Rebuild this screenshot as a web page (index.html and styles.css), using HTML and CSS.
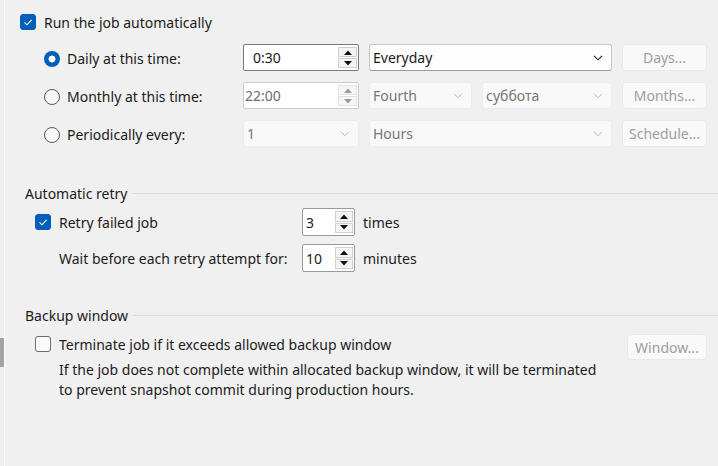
FILE: index.html
```html
<!DOCTYPE html>
<html>
<head>
<meta charset="utf-8">
<link rel="stylesheet" href="styles.css">
</head>
<body>
<div class="page">
  <div class="edge"><div class="grip"></div></div>
  <div class="panel">
    <div class="row-top">
      <span class="cb checked"><svg width="16" height="16" viewBox="0 0 16 16"><path d="M4.5 8.3 L7 10.8 L11.6 5.8" fill="none" stroke="#fff" stroke-width="1.1"/></svg></span>
      <span class="lbl">Run the job automatically</span>
    </div>

    <div class="sched">
      <div class="radio-cell"><span class="rb on"></span><span>Daily at this time:</span></div>
      <div class="spin time focus">
        <span class="val">0:30</span>
        <span class="arrows">
          <span class="arr"><svg width="8" height="5" viewBox="0 0 8 5"><path d="M0 5 L4 0.5 L8 5Z" fill="#111"/></svg></span>
          <span class="arr"><svg width="8" height="5" viewBox="0 0 8 5"><path d="M0 0 L4 4.5 L8 0Z" fill="#111"/></svg></span>
        </span>
      </div>
      <div class="combo wide"><span>Everyday</span><svg width="10" height="6" viewBox="0 0 10 6"><path d="M1 0.8 L5 4.8 L9 0.8" fill="none" stroke="#222" stroke-width="1.1"/></svg></div>
      <div class="btn">Days...</div>

      <div class="radio-cell"><span class="rb"></span><span>Monthly at this time:</span></div>
      <div class="spin time dis">
        <span class="val">22:00</span>
        <span class="arrows">
          <span class="arr"><svg width="8" height="5" viewBox="0 0 8 5"><path d="M0 5 L4 0.5 L8 5Z" fill="#9a9a9a"/></svg></span>
          <span class="arr"><svg width="8" height="5" viewBox="0 0 8 5"><path d="M0 0 L4 4.5 L8 0Z" fill="#9a9a9a"/></svg></span>
        </span>
      </div>
      <div class="combo dis"><span>Fourth</span><svg width="10" height="6" viewBox="0 0 10 6"><path d="M1 0.8 L5 4.8 L9 0.8" fill="none" stroke="#b5b5b5" stroke-width="1"/></svg></div>
      <div class="combo dis"><span>суббота</span><svg width="10" height="6" viewBox="0 0 10 6"><path d="M1 0.8 L5 4.8 L9 0.8" fill="none" stroke="#b5b5b5" stroke-width="1"/></svg></div>
      <div class="btn">Months...</div>

      <div class="radio-cell"><span class="rb"></span><span>Periodically every:</span></div>
      <div class="combo dis"><span>1</span><svg width="10" height="6" viewBox="0 0 10 6"><path d="M1 0.8 L5 4.8 L9 0.8" fill="none" stroke="#b5b5b5" stroke-width="1"/></svg></div>
      <div class="combo dis wide"><span>Hours</span><svg width="10" height="6" viewBox="0 0 10 6"><path d="M1 0.8 L5 4.8 L9 0.8" fill="none" stroke="#b5b5b5" stroke-width="1"/></svg></div>
      <div class="btn">Schedule...</div>
    </div>

    <div class="group-head retry-head"><span>Automatic retry</span><span class="rule"></span></div>
    <div class="retry">
      <div class="retry-label"><span class="cb checked"><svg width="16" height="16" viewBox="0 0 16 16"><path d="M4.5 8.3 L7 10.8 L11.6 5.8" fill="none" stroke="#fff" stroke-width="1.1"/></svg></span><span>Retry failed job</span></div>
      <div class="spin num">
        <span class="val">3</span>
        <span class="arrows">
          <span class="arr"><svg width="8" height="5" viewBox="0 0 8 5"><path d="M0 5 L4 0.5 L8 5Z" fill="#111"/></svg></span>
          <span class="arr"><svg width="8" height="5" viewBox="0 0 8 5"><path d="M0 0 L4 4.5 L8 0Z" fill="#111"/></svg></span>
        </span>
      </div>
      <span class="unit">times</span>

      <div class="retry-label indent"><span>Wait before each retry attempt for:</span></div>
      <div class="spin num">
        <span class="val">10</span>
        <span class="arrows">
          <span class="arr"><svg width="8" height="5" viewBox="0 0 8 5"><path d="M0 5 L4 0.5 L8 5Z" fill="#111"/></svg></span>
          <span class="arr"><svg width="8" height="5" viewBox="0 0 8 5"><path d="M0 0 L4 4.5 L8 0Z" fill="#111"/></svg></span>
        </span>
      </div>
      <span class="unit">minutes</span>
    </div>

    <div class="group-head backup-head"><span>Backup window</span><span class="rule"></span></div>
    <div class="backup-row">
      <div class="backup-label"><span class="cb"></span><span>Terminate job if it exceeds allowed backup window</span></div>
      <div class="btn win">Window...</div>
    </div>
    <p class="desc">If the job does not complete within allocated backup window, it will be terminated<br>to prevent snapshot commit during production hours.</p>
  </div>
</div>
</body>
</html>
```

FILE: styles.css
```css
* { box-sizing: border-box; }
html, body {
  margin: 0;
  padding: 0;
  background: #f0f0f0;
}
body {
  font-family: "Noto Sans", "Segoe UI", sans-serif;
  font-size: 14px;
  color: #1b1b1b;
  width: 718px;
  height: 466px;
  overflow: hidden;
}
.page {
  display: flex;
  height: 466px;
}
.edge {
  flex: none;
  width: 4px;
  position: relative;
  background: #efefef;
}
.grip {
  position: absolute;
  left: 0;
  top: 338px;
  width: 4px;
  height: 29px;
  background: #a3a3a3;
}
.panel {
  flex: 1;
  min-width: 0;
  border-left: 1px solid #ffffff;
  padding: 10px 11px 0 15px;
}
.row-top {
  display: flex;
  align-items: center;
  gap: 8px;
  height: 24px;
}
.cb {
  width: 16px;
  height: 16px;
  border-radius: 3px;
  border: 1px solid #6b6b6b;
  background: #fbfbfb;
  display: inline-flex;
  flex: none;
}
.cb.checked {
  background: #005fb8;
  border-color: #005fb8;
}
.cb svg { margin: -1px; }

.sched {
  margin-top: 10px;
  margin-left: 24px;
  display: grid;
  grid-template-columns: 189px 116px 103px 130px 85px;
  grid-template-rows: 27px 27px 27px;
  column-gap: 10px;
  row-gap: 11px;
}
.radio-cell {
  display: flex;
  align-items: center;
  gap: 7px;
  height: 27px;
  padding-top: 2px;
}
.rb {
  width: 16px;
  height: 16px;
  border-radius: 50%;
  border: 1px solid #5c5c5c;
  background: #f7f7f7;
  flex: none;
}
.rb.on {
  border: none;
  background: radial-gradient(circle, #ffffff 0 3.2px, #005fb8 3.8px);
}
.spin {
  display: flex;
  align-items: stretch;
  background: #fff;
  border: 1px solid #9a9a9a;
  border-radius: 2px;
}
.spin .val {
  flex: 1;
  display: flex;
  align-items: center;
}
.spin.time .val { padding-left: 9px; }
.spin.time.focus { border-color: #7a7a7a; }
.spin.dis {
  border-color: #cbcbcb;
  color: #6d6d6d;
}
.spin.time.dis .val { padding-left: 1px; }
.arrows {
  display: flex;
  flex-direction: column;
  justify-content: center;
  gap: 1px;
  padding: 2px 1px 2px 0;
}
.arr {
  width: 19px;
  height: 11px;
  display: flex;
  align-items: center;
  justify-content: center;
  border: 1px solid #cfcfcf;
  background: #f4f4f4;
}
.spin.dis .arr {
  border-color: #e2e2e2;
  background: #f6f6f6;
}
.combo {
  display: flex;
  align-items: center;
  justify-content: space-between;
  padding: 0 8px 0 3px;
  background: #fdfdfd;
  border: 1px solid #c6c6c6;
  border-bottom-color: #9c9c9c;
  border-radius: 3px;
}
.combo.wide { grid-column: span 2; }
.combo.dis {
  background: #f9f9f9;
  border: 1px solid #ececec;
  color: #767676;
}
.btn {
  display: flex;
  align-items: center;
  justify-content: center;
  background: #f9f9f9;
  border: 1px solid #e8e8e8;
  border-radius: 4px;
  color: #9e9e9e;
}

.group-head {
  display: flex;
  align-items: center;
  gap: 5px;
  height: 20px;
  margin-left: 5px;
  margin-right: -11px;
}
.group-head .rule {
  flex: 1;
  height: 1px;
  background: #dadada;
}
.retry-head { margin-top: 36px; }
.backup-head { margin-top: 33px; }

.retry {
  margin-top: 5px;
  margin-left: 15px;
  display: grid;
  grid-template-columns: 259px 53px auto;
  grid-auto-rows: 28px;
  row-gap: 8px;
  column-gap: 8px;
}
.retry-label {
  display: flex;
  align-items: center;
  gap: 8px;
}
.retry-label.indent { padding-left: 24px; }
.spin.num .val { padding-left: 3px; }
.spin.num .arr { width: 18px; }
.unit {
  display: flex;
  align-items: center;
}

.backup-row {
  margin-top: 9px;
  margin-left: 15px;
  display: flex;
  justify-content: space-between;
  height: 26px;
}
.backup-label {
  display: flex;
  align-items: center;
  gap: 8px;
  height: 20px;
}
.btn.win {
  width: 80px;
  height: 26px;
}
.desc {
  margin: 0 0 0 39px;
  line-height: 20px;
}
```
